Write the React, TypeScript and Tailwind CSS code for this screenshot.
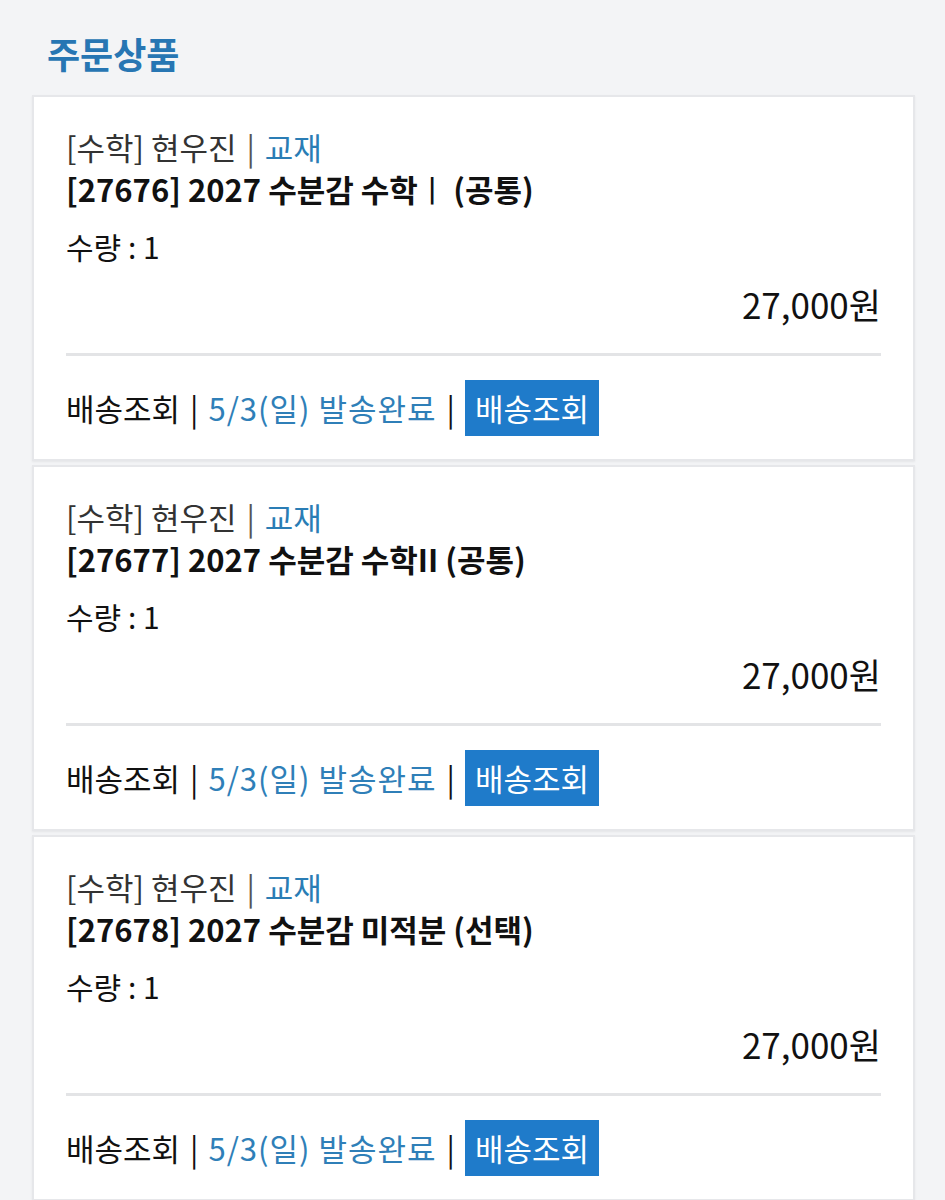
const items = [
  { code: "27676", name: <>2027 수분감 수학<span className="font-normal">ㅣ</span> (공통)</> },
  { code: "27677", name: <>2027 수분감 수학II (공통)</> },
  { code: "27678", name: <>2027 수분감 미적분 (선택)</> },
];

function OrderCard({ code, name }: { code: string; name: React.ReactNode }) {
  return (
    <div className="border-2 border-[#e6e7ea] bg-white px-[32px] pt-[29px] pb-[23px] shadow-[0_1px_2px_rgba(0,0,0,0.06)]">
      <div className="text-[31px] leading-[42px] text-[#333]">
        [수학] 현우진 <span className="mx-[3px] text-[#555]">|</span> <span className="text-[#2a7db5]">교재</span>
      </div>
      <div className="text-[31px] leading-[42px] font-bold text-[#111]">
        [{code}] {name}
      </div>
      <div className="mt-[15px] text-[30px] leading-[42px] text-[#111]">수량 : 1</div>
      <div className="mt-[16px] text-right text-[35px] leading-[42px] text-[#111]">27,000원</div>
      <div className="mt-[28px] h-[3px] bg-[#e3e4e6]" />
      <div className="mt-[24px] flex items-center text-[31px] leading-[42px]">
        <span className="text-[#111]">배송조회</span>
        <span className="mx-[10px] text-[#111]">|</span>
        <span className="tracking-[1px] text-[#2f7fb8]">5/3(일) 발송완료</span>
        <span className="mx-[10px] text-[#111]">|</span>
        <span className="flex h-[56px] items-center bg-[#1f7bca] px-[10px] text-white">배송조회</span>
      </div>
    </div>
  );
}

export default function App() {
  return (
    <div
      className="min-h-[1200px] bg-[#f3f4f6] pl-[32px] pr-[30px] pt-[28px]"
      style={{ fontFamily: '"Noto Sans CJK KR", "Noto Sans", sans-serif' }}
    >
      <h1 className="pl-[15px] text-[36px] font-bold leading-[50px] text-[#2776b3]">주문상품</h1>
      <div className="mt-[17px] flex flex-col gap-[4px]">
        {items.map((it) => (
          <OrderCard key={it.code} code={it.code} name={it.name} />
        ))}
      </div>
    </div>
  );
}
